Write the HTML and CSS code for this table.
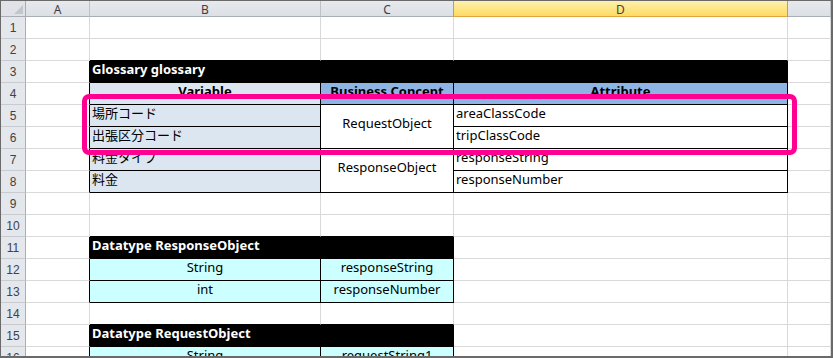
FILE: index.html
```html
<!DOCTYPE html>
<html lang="ja">
<head>
<meta charset="utf-8">
<title>Glossary</title>
<link rel="stylesheet" href="styles.css">
</head>
<body>
<div class="frame">
  <div class="sheet">
    <!-- column header -->
    <div class="corner"><span class="tri"></span></div>
    <div class="ch">A</div>
    <div class="ch">B</div>
    <div class="ch pre-sel">C</div>
    <div class="ch sel">D</div>
    <div class="ch"></div>

    <!-- row 1 -->
    <div class="rh">1</div><div class="c"></div><div class="c"></div><div class="c"></div><div class="c"></div><div class="c"></div>
    <!-- row 2 -->
    <div class="rh">2</div><div class="c"></div><div class="c bb"></div><div class="c bb"></div><div class="c bb"></div><div class="c"></div>
    <!-- row 3 -->
    <div class="rh">3</div><div class="c br"></div><div class="c t span3">Glossary glossary</div><div class="c"></div>
    <!-- row 4 -->
    <div class="rh">4</div><div class="c br"></div><div class="c tb h1 ctr bold">Variable</div><div class="c tb h2 ctr bold">Business Concept</div><div class="c tb h2 ctr bold">Attribute</div><div class="c"></div>
    <!-- row 5 -->
    <div class="rh">5</div><div class="c br"></div><div class="c tb v">場所コード</div><div class="c tb ctr mid rspan2">RequestObject</div><div class="c tb">areaClassCode</div><div class="c"></div>
    <!-- row 6 -->
    <div class="rh">6</div><div class="c br"></div><div class="c tb v">出張区分コード</div><div class="c tb">tripClassCode</div><div class="c"></div>
    <!-- row 7 -->
    <div class="rh">7</div><div class="c br"></div><div class="c tb v">料金タイプ</div><div class="c tb ctr mid rspan2">ResponseObject</div><div class="c tb">responseString</div><div class="c"></div>
    <!-- row 8 -->
    <div class="rh">8</div><div class="c br"></div><div class="c tb v">料金</div><div class="c tb">responseNumber</div><div class="c"></div>
    <!-- row 9 -->
    <div class="rh">9</div><div class="c"></div><div class="c"></div><div class="c"></div><div class="c"></div><div class="c"></div>
    <!-- row 10 -->
    <div class="rh">10</div><div class="c"></div><div class="c bb"></div><div class="c bb"></div><div class="c"></div><div class="c"></div>
    <!-- row 11 -->
    <div class="rh">11</div><div class="c br"></div><div class="c t span2">Datatype ResponseObject</div><div class="c"></div><div class="c"></div>
    <!-- row 12 -->
    <div class="rh">12</div><div class="c br"></div><div class="c tb cy ctr">String</div><div class="c tb cy ctr">responseString</div><div class="c"></div><div class="c"></div>
    <!-- row 13 -->
    <div class="rh">13</div><div class="c br"></div><div class="c tb cy ctr">int</div><div class="c tb cy ctr">responseNumber</div><div class="c"></div><div class="c"></div>
    <!-- row 14 -->
    <div class="rh">14</div><div class="c"></div><div class="c bb"></div><div class="c bb"></div><div class="c"></div><div class="c"></div>
    <!-- row 15 -->
    <div class="rh">15</div><div class="c br"></div><div class="c t span2">Datatype RequestObject</div><div class="c"></div><div class="c"></div>
    <!-- row 16 -->
    <div class="rh">16</div><div class="c br"></div><div class="c tb cy ctr">String</div><div class="c tb cy ctr">requestString1</div><div class="c"></div><div class="c"></div>
  </div>
  <div class="highlight"></div>
</div>
</body>
</html>
```

FILE: styles.css
```css
* { box-sizing: border-box; }

html, body {
  margin: 0;
  padding: 0;
  background: #ffffff;
}

.frame {
  position: relative;
  width: 833px;
  height: 358px;
  border-style: solid;
  border-color: #6a6a6a;
  border-width: 1px 2px 2px 1px;
  overflow: hidden;
}

.sheet {
  display: grid;
  grid-template-columns: 25px 64px 231px 133px 334px 43px;
  grid-template-rows: 16px;
  grid-auto-rows: 22px;
  height: 355px;
  overflow: hidden;
  font-family: "Noto Sans", "Noto Sans CJK JP", sans-serif;
}

/* headers */
.corner {
  position: relative;
  background: #dfe3e8;
  border-right: 1px solid #a9aeb5;
  border-bottom: 1px solid #a9aeb5;
}
.tri {
  position: absolute;
  right: 2px;
  bottom: 2px;
  width: 0;
  height: 0;
  border-left: 9px solid transparent;
  border-bottom: 9px solid #c3c7cc;
}

.ch {
  display: flex;
  align-items: center;
  justify-content: center;
  background: linear-gradient(#e6e9ed, #dcdfe4);
  border-right: 1px solid #bfc3c9;
  border-bottom: 1px solid #a9aeb5;
  font-family: "Noto Sans", sans-serif;
  font-size: 12px;
  color: #3b3f45;
  padding-top: 1px;
}
.ch.pre-sel { border-right-color: #d49b3c; }
.ch.sel {
  background: linear-gradient(#fff0ad, #fdda63);
  border-right-color: #d49b3c;
  border-bottom: 1px solid #e0a53e;
  color: #4a4230;
}

.rh {
  display: flex;
  align-items: center;
  justify-content: center;
  background: #e4e7eb;
  border-right: 1px solid #a9aeb5;
  border-bottom: 1px solid #c8ccd1;
  font-family: "Liberation Sans", sans-serif;
  font-size: 12px;
  color: #3f4246;
}

/* cells */
.c {
  display: flex;
  align-items: flex-end;
  padding: 0 2px 4px 2px;
  background: #ffffff;
  border-right: 1px solid #d9d9d9;
  border-bottom: 1px solid #d9d9d9;
  font-size: 13px;
  line-height: 17px;
  color: #000000;
  white-space: nowrap;
  overflow: hidden;
}

.br { border-right-color: #000000; }
.bb { border-bottom-color: #000000; }
.tb {
  border-right-color: #000000;
  border-bottom-color: #000000;
}

.t {
  background: #000000;
  color: #ffffff;
  font-weight: bold;
  border-right-color: #000000;
  border-bottom-color: #000000;
}
.span3 { grid-column: span 3; }
.span2 { grid-column: span 2; }
.rspan2 { grid-row: span 2; }

.bold { font-weight: bold; }
.ctr { justify-content: center; }
.mid {
  align-items: center;
  padding-bottom: 6px;
}

.h1 { background: #dce6f1; }
.h2 { background: #8db4e2; }
.v { background: #dce6f1; }
.cy { background: #ccffff; }

/* pink call-out */
.highlight {
  position: absolute;
  left: 81px;
  top: 93px;
  width: 715px;
  height: 61px;
  border: 5px solid #ff0092;
  border-radius: 7px;
}
```
